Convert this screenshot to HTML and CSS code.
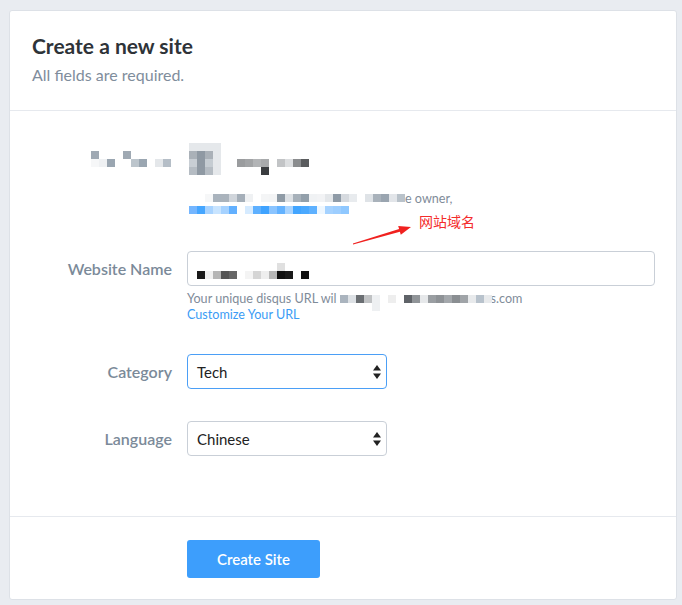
FILE: index.html
```html
<!DOCTYPE html>
<html lang="en">
<head>
<meta charset="utf-8">
<title>Create a new site</title>
<link rel="stylesheet" href="styles.css">
</head>
<body>
<div class="page">
  <div class="card">
    <div class="card-header">
      <h1 class="title">Create a new site</h1>
      <p class="subtitle">All fields are required.</p>
    </div>
    <div class="card-body">
      <div class="row row-owner">
        <div class="label-cell"><span class="pix pix-label"></span></div>
        <div class="field">
          <span class="pix pix-value"></span>
          <div class="owner-line"><span class="pix pix-owner"></span><span class="owner-text">e owner,</span></div>
          <span class="pix pix-blue"></span>
        </div>
      </div>
      <div class="row row-name">
        <label class="label">Website Name</label>
        <div class="field">
          <div class="input"><span class="pix pix-input"></span></div>
          <p class="help">Your unique disqus URL wil<span class="pix pix-url"></span>s.com</p>
          <a class="link" href="#">Customize Your URL</a>
        </div>
      </div>
      <div class="row row-category">
        <label class="label">Category</label>
        <div class="field">
          <div class="select focused">
            <span class="select-text">Tech</span>
            <svg class="select-arrows" width="8" height="14" viewBox="0 0 8 14"><polygon points="0,5.5 4,0 8,5.5" fill="#222"/><polygon points="0,8.5 8,8.5 4,14" fill="#222"/></svg>
          </div>
        </div>
      </div>
      <div class="row row-language">
        <label class="label">Language</label>
        <div class="field">
          <div class="select">
            <span class="select-text">Chinese</span>
            <svg class="select-arrows" width="8" height="14" viewBox="0 0 8 14"><polygon points="0,5.5 4,0 8,5.5" fill="#222"/><polygon points="0,8.5 8,8.5 4,14" fill="#222"/></svg>
          </div>
        </div>
      </div>
    </div>
    <div class="card-footer">
      <button class="btn" type="button">Create Site</button>
    </div>
  </div>
</div>
<svg class="annotation-arrow" width="682" height="605" viewBox="0 0 682 605">
  <polygon points="352.9,243.5 399.1,228.9 398.2,226.1 411,227 400.8,234.7 399.9,231.8 353.1,244.5" fill="#f0211f"/>
</svg>
<span class="annotation-text">网站域名</span>
</body>
</html>
```

FILE: styles.css
```css
* { box-sizing: border-box; }

body {
  margin: 0;
  background: #e9ecf1;
  font-family: Lato, "Open Sans", sans-serif;
  color: #2e3338;
  position: relative;
}

.page {
  padding: 10px 5px 5px 9px;
}

.card {
  width: 668px;
  height: 590px;
  background: #fff;
  border: 1px solid #dde1e7;
  border-radius: 3px;
  display: flex;
  flex-direction: column;
}

.card-header {
  height: 100px;
  padding: 22px 22px 0;
  border-bottom: 1px solid #e6e9ee;
}

.title {
  margin: 0;
  font-size: 21px;
  line-height: 26px;
  font-weight: 700;
  color: #2e3338;
}

.subtitle {
  margin: 6px 0 0;
  font-size: 16px;
  line-height: 20px;
  color: #7f8d9c;
}

.card-body {
  flex: 1;
  padding-top: 32px;
}

.row {
  display: grid;
  grid-template-columns: 162px 468px;
  column-gap: 15px;
  align-items: center;
}

.label {
  text-align: right;
  font-size: 16px;
  font-weight: 600;
  color: #7b8a99;
}

.label-cell {
  display: flex;
  justify-content: flex-end;
  align-self: start;
  padding-top: 8px;
}

.field { display: block; }

/* pixelated redaction blocks */
.pix {
  display: block;
  position: relative;
}
.pix::before {
  content: "";
  display: block;
  width: 8px;
  height: 8px;
}

.pix-label { width: 81px; height: 16px; }
.pix-label::before {
  background: #9fa9b3;
  box-shadow: 32px 0 #9fa9b3,
    0 8px #f6f7f8, 8px 8px #eff1f3, 16px 8px #9aa6b1, 40px 8px #bcc5cc, 48px 8px #9aa6b1,
    64px 8px #e4e7ea, 72px 8px #b5bec7;
}

.pix-value { width: 128px; height: 32px; margin-left: 2px; }
.pix-value::before {
  background: #e5e8eb;
  box-shadow: 8px 0 #e5e8eb, 16px 0 #e5e8eb, 24px 0 #e5e8eb,
    0 8px #aab1b8, 8px 8px #8f99a3, 16px 8px #aab1b8, 24px 8px #e5e8eb,
    0 16px #c8ced4, 8px 16px #8f99a3, 16px 16px #c5ccd2, 24px 16px #e5e8eb,
    48px 16px #9a9c9e, 56px 16px #a2a4a6, 64px 16px #b2b4b6, 72px 16px #a8aaac,
    88px 16px #c2c4c6, 96px 16px #dcdee0, 104px 16px #8a8c8e, 112px 16px #5a5c5e,
    0 24px #b5bcc3, 8px 24px #8f99a3, 16px 24px #b5bcc3, 24px 24px #e5e8eb, 72px 24px #3a3d40;
}

.owner-line {
  display: flex;
  align-items: center;
  margin: 15px 0 0 18px;
  height: 16px;
}
.owner-text {
  font-size: 12.6px;
  color: #7f8c99;
}
.pix-owner { width: 200px; height: 8px; }
.pix-owner::before {
  background: #f6f7f8;
  box-shadow: 8px 0 #a9b3bd, 16px 0 #aab3bc, 24px 0 #d0d5db, 32px 0 #a5afb9, 40px 0 #eff1f3,
    56px 0 #f4f5f6, 64px 0 #f3f4f5, 72px 0 #8f9ba6, 80px 0 #dde1e5, 88px 0 #a7b1ba, 96px 0 #93a0ab,
    104px 0 #f0f2f4, 112px 0 #f2f3f5, 120px 0 #e4e7ea, 128px 0 #8f9ba7, 136px 0 #d6dadf, 144px 0 #e8ebee,
    160px 0 #dfe3e7, 168px 0 #a9b2bb, 176px 0 #9aa5b0, 184px 0 #e2e5e9, 192px 0 #b9c2ca;
}

.pix-blue { width: 160px; height: 8px; margin: 0 0 0 2px; }
.pix-blue::before {
  background: #74b6ff;
  box-shadow: 8px 0 #45a6ff, 16px 0 #a8d3ff, 24px 0 #c8e4ff, 32px 0 #a6d2ff, 40px 0 #62b0ff,
    56px 0 #d6ebff, 64px 0 #5eb0ff, 72px 0 #3fa3ff, 80px 0 #8ac4ff, 88px 0 #63b2ff, 96px 0 #a9d4ff,
    104px 0 #42a5ff, 112px 0 #4ba9ff, 120px 0 #5eb1ff, 128px 0 #eef7ff, 136px 0 #a5d2ff, 144px 0 #9dceff,
    152px 0 #8fc8ff;
}

.row-name { margin-top: 37px; align-items: start; }
.row-name .label { padding-top: 8px; }

.input {
  height: 35px;
  border: 1px solid #c9cfd7;
  border-radius: 4px;
  padding: 11px 0 0 9px;
}
.pix-input { width: 112px; height: 16px; }
.pix-input::before {
  background: transparent;
  box-shadow: 80px 0 #e0e0e0,
    0 8px #1a1a1a, 8px 8px #f0f0f0, 16px 8px #b5b5b5, 24px 8px #555555, 32px 8px #666666,
    48px 8px #f4f4f4, 56px 8px #d5d5d5, 64px 8px #eeeeee, 72px 8px #b8b8b8, 80px 8px #111111,
    88px 8px #1a1a1a, 104px 8px #111111;
}

.help {
  margin: 5px 0 0;
  font-size: 12.6px;
  line-height: 16px;
  color: #7f8c99;
  display: flex;
  align-items: center;
}
.pix-url { width: 151px; height: 8px; margin-left: 3px; }
.pix-url::before {
  background: #aab4be;
  box-shadow: 8px 0 #dde1e5, 16px 0 #6a6e72, 24px 0 #c0c2c4, 32px 0 #eef0f2, 32px 8px #eef0f2,
    48px 0 #eeeeee, 64px 0 #5f6368, 72px 0 #909498, 80px 0 #e6e8ea, 88px 0 #9a9ea2, 96px 0 #8e9296,
    104px 0 #a4a8ac, 112px 0 #8a8e92, 120px 0 #a0a4a8, 128px 0 #e8eaec, 136px 0 #b8c2cc, 144px 0 #e8eaec;
}

.link {
  display: block;
  font-size: 12.6px;
  line-height: 16px;
  color: #3b9cf5;
  text-decoration: none;
}

.row-category { margin-top: 31px; }
.row-language { margin-top: 32px; }

.select {
  position: relative;
  width: 200px;
  height: 35px;
  border: 1px solid #c9cfd7;
  border-radius: 4px;
  display: flex;
  align-items: center;
  padding: 0 9px;
  font-size: 15px;
  color: #222;
}
.select.focused { border-color: #4b9ff6; }
.select-text { flex: 1; }
.select-arrows { display: block; margin-right: -4px; }

.card-footer {
  height: 83px;
  border-top: 1px solid #e6e9ee;
  padding: 23px 0 0 177px;
}

.btn {
  width: 133px;
  height: 38px;
  border: 0;
  border-radius: 3px;
  background: #3d9efc;
  color: #fff;
  font-family: Lato, "Open Sans", sans-serif;
  font-size: 15px;
  font-weight: 600;
}

.annotation-arrow {
  position: absolute;
  left: 0;
  top: 0;
  pointer-events: none;
}

.annotation-text {
  position: absolute;
  left: 419px;
  top: 211px;
  font-family: "Noto Sans CJK SC", sans-serif;
  font-size: 14px;
  line-height: 20px;
  color: #f42c2c;
}
```
